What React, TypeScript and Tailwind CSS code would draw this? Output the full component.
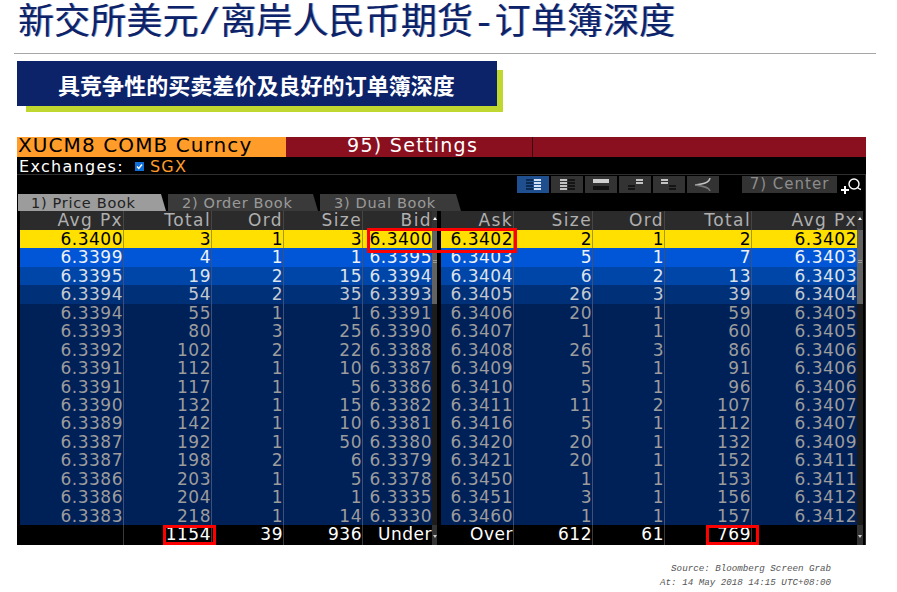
const bidRows: string[][] = [
  ["6.3400", "3", "1", "3", "6.3400"],
  ["6.3399", "4", "1", "1", "6.3395"],
  ["6.3395", "19", "2", "15", "6.3394"],
  ["6.3394", "54", "2", "35", "6.3393"],
  ["6.3394", "55", "1", "1", "6.3391"],
  ["6.3393", "80", "3", "25", "6.3390"],
  ["6.3392", "102", "2", "22", "6.3388"],
  ["6.3391", "112", "1", "10", "6.3387"],
  ["6.3391", "117", "1", "5", "6.3386"],
  ["6.3390", "132", "1", "15", "6.3382"],
  ["6.3389", "142", "1", "10", "6.3381"],
  ["6.3387", "192", "1", "50", "6.3380"],
  ["6.3387", "198", "2", "6", "6.3379"],
  ["6.3386", "203", "1", "5", "6.3378"],
  ["6.3386", "204", "1", "1", "6.3335"],
  ["6.3383", "218", "1", "14", "6.3330"],
];

const askRows: string[][] = [
  ["6.3402", "2", "1", "2", "6.3402"],
  ["6.3403", "5", "1", "7", "6.3403"],
  ["6.3404", "6", "2", "13", "6.3403"],
  ["6.3405", "26", "3", "39", "6.3404"],
  ["6.3406", "20", "1", "59", "6.3405"],
  ["6.3407", "1", "1", "60", "6.3405"],
  ["6.3408", "26", "3", "86", "6.3406"],
  ["6.3409", "5", "1", "91", "6.3406"],
  ["6.3410", "5", "1", "96", "6.3406"],
  ["6.3411", "11", "2", "107", "6.3407"],
  ["6.3416", "5", "1", "112", "6.3407"],
  ["6.3420", "20", "1", "132", "6.3409"],
  ["6.3421", "20", "1", "152", "6.3411"],
  ["6.3450", "1", "1", "153", "6.3411"],
  ["6.3451", "3", "1", "156", "6.3412"],
  ["6.3460", "1", "1", "157", "6.3412"],
];

const rowStyle = (i: number) => {
  if (i === 0) return "bg-[#ffe000] text-black";
  if (i === 1) return "bg-[#0056d6] text-[#eef2f8]";
  if (i === 2) return "bg-[#0046a8] text-[#dde3ec]";
  if (i === 3) return "bg-[#003078] text-[#c4c8d0]";
  return "bg-[#002058] text-[#9c9c9c]";
};

const RedBox = ({ className }: { className: string }) => (
  <div className={"absolute border-[3px] border-[#fe0000] pointer-events-none " + className} />
);

const Pane = ({
  cols,
  head,
  rows,
  foot,
  box,
}: {
  cols: string[];
  head: string[];
  rows: string[][];
  foot: string[];
  box: string;
}) => (
  <div className="relative flex flex-col">
    <div className="flex h-[19px] bg-[#2b2b2b] text-[#b0b0b0] tracking-[1.4px]">
      {head.map((h, c) => (
        <div key={c} className={cols[c] + " text-right border-r border-[#454545] last:border-r-0"}>
          {h}
        </div>
      ))}
    </div>
    {rows.map((r, i) => (
      <div key={i} className={"flex h-[18.44px] " + rowStyle(i)}>
        {r.map((v, c) => (
          <div
            key={c}
            className={
              cols[c] +
              " text-right border-r last:border-r-0 " +
              (i === 0 ? "border-[#a89a10]" : "border-[#3c5078]")
            }
          >
            {v}
          </div>
        ))}
      </div>
    ))}
    <div className="flex h-[20px] bg-black text-white">
      {foot.map((v, c) => (
        <div key={c} className={cols[c] + " text-right border-r border-[#3a3a3a] last:border-r-0"}>
          {v}
        </div>
      ))}
    </div>
    <RedBox className={box} />
  </div>
);

const Scrollbar = ({ className }: { className: string }) => (
  <div className={"flex flex-col bg-[#1c1c1c] " + className}>
    <div className="h-[19px] flex justify-center pt-[6px] bg-[#333]">
      <div className="border-x-[2px] border-b-[3px] border-x-transparent border-b-white h-0 w-0" />
    </div>
    <div className="h-[74px] bg-[#626262] flex flex-col items-center pt-[30px] gap-px">
      <div className="w-[4px] h-px bg-[#999]" />
      <div className="w-[4px] h-px bg-[#999]" />
    </div>
    <div className="flex-1" />
    <div className="h-[20px] flex justify-center pt-[10px] bg-[#333]">
      <div className="border-x-[2px] border-t-[3px] border-x-transparent border-t-[#ccc] h-0 w-0" />
    </div>
  </div>
);

const ToolButton = ({ active, children }: { active?: boolean; children: React.ReactNode }) => (
  <div className={"w-[32px] h-[17px] flex items-center justify-center " + (active ? "bg-[#1f4f8f]" : "bg-[#333333]")}>
    <svg width="22" height="13" viewBox="0 0 22 13">
      {children}
    </svg>
  </div>
);

const Tab = ({ active, label, className }: { active?: boolean; label: string; className: string }) => (
  <div
    className={
      "h-[17px] leading-[18px] text-[14.5px] tracking-[0.7px] whitespace-nowrap [clip-path:polygon(0_0,calc(100%-5px)_0,100%_100%,0_100%)] " +
      (active ? "bg-[#9c9c9c] text-[#222]" : "bg-[#3a3a3a] text-[#9a9a9a]") +
      " " +
      className
    }
  >
    {label}
  </div>
);

export default function App() {
  return (
    <div className="w-[897px] h-[592px] bg-white overflow-hidden flex flex-col">
      <div className="h-[54px] ml-[14px] w-[862px] border-b border-[#a6a6a6] pl-[4px] pt-[4px]">
        <h1 className="font-['Liberation_Mono','Noto_Sans_CJK_SC',serif] text-[36px] tracking-[0.1px] leading-[42px] text-[#0c2269] whitespace-nowrap [text-shadow:1px_0_0_#8f9bc0]">
          新交所美元/离岸人民币期货-订单簿深度
        </h1>
      </div>

      <div className="ml-[17px] mt-[7px] w-[486px] h-[51px] relative">
        <div className="absolute left-[9px] top-[9px] w-[477px] h-[42px] bg-[#c0d72f]" />
        <div className="relative w-[480px] h-[45px] bg-[#0c2269] text-white font-bold text-[22px] tracking-[0.05px] leading-[46px] pl-[41px] font-['Noto_Sans_CJK_SC',sans-serif] whitespace-nowrap">
          具竞争性的买卖差价及良好的订单簿深度
        </div>
      </div>

      <div className="ml-[17px] mt-[25px] w-[849px] h-[408px] shrink-0 bg-black font-['DejaVu_Sans',sans-serif] text-[17px] leading-[19px] tracking-[0.5px] flex flex-col">
        <div className="flex h-[20px] shrink-0">
          <div className="w-[269px] bg-[#ff9c2a] text-black text-[20px] leading-[16px] tracking-[1.1px] pl-px whitespace-nowrap">
            XUCM8 COMB Curncy
          </div>
          <div className="w-[247px] bg-[#8a101f] text-white text-[19px] leading-[17px] tracking-[1.3px] pl-[61px] border-r border-[#3c0810] whitespace-nowrap">
            95) Settings
          </div>
          <div className="flex-1 bg-[#8a101f]" />
        </div>

        <div className="h-[18px] shrink-0 flex items-center pt-px border-b border-[#2e2e2e] text-[16px] leading-[17px] tracking-[1.3px] text-white">
          <span className="ml-[2px]">Exchanges:</span>
          <span className="ml-[11px] w-[9px] h-[9px] bg-[#0f6fd8] flex items-center justify-center">
            <svg width="9" height="9" viewBox="0 0 9 9">
              <path d="M2 4.5 L3.8 6.5 L7 2.5" stroke="#fff" strokeWidth="1.4" fill="none" />
            </svg>
          </span>
          <span className="ml-[6px] text-[#ff9c2a]">SGX</span>
        </div>

        <div className="flex-1 pl-[3px] flex flex-col border-r border-[#2e2e2e]">
          <div className="h-[19px] shrink-0 flex items-start justify-end gap-[2px] pt-px pr-[3px]">
            <ToolButton active>
              <path d="M4 1h7v2H4zM4 4h7v2H4zM4 7h7v2H4zM4 10h7v2H4z" fill="#0c2a50" />
              <path d="M12 1h7v2h-7zM12 4h7v2h-7zM12 7h7v2h-7zM12 10h7v2h-7z" fill="#cfe0f2" />
            </ToolButton>
            <ToolButton>
              <path d="M4 1h7v2H4zM4 4h7v2H4zM4 7h7v2H4zM4 10h7v2H4z" fill="#c4c4c4" />
              <path d="M12 1h7v2h-7zM12 4h7v2h-7zM12 7h7v2h-7zM12 10h7v2h-7z" fill="#151515" />
            </ToolButton>
            <ToolButton>
              <path d="M3 1h16v4H3z" fill="#d0d0d0" />
              <path d="M3 8h16v4H3z" fill="#111" />
            </ToolButton>
            <ToolButton>
              <path d="M4 7h7v2H4zM4 10h7v2H4z" fill="#151515" />
              <path d="M12 1h7v2h-7zM12 4h7v2h-7z" fill="#c4c4c4" />
            </ToolButton>
            <ToolButton>
              <path d="M3 1h7v2H3zM3 4h7v2H3z" fill="#c4c4c4" />
              <path d="M11 7h7v2h-7zM11 10h7v2h-7z" fill="#151515" />
            </ToolButton>
            <ToolButton>
              <path d="M18 0 C17 5 11 6 3 7" stroke="#c4c4c4" strokeWidth="1.5" fill="none" />
              <path d="M3 7 C11 8 17 9 18 13" stroke="#777" strokeWidth="1.5" fill="none" />
            </ToolButton>
            <div className="ml-[21px] w-[95px] h-[17px] bg-[#333333] text-[#8c8c8c] text-[15px] tracking-[1px] leading-[17px] text-center">
              7) Center
            </div>
            <svg width="22" height="18" viewBox="0 0 22 18" className="ml-[1px]">
              <circle cx="14" cy="8" r="5" stroke="#fff" strokeWidth="1.4" fill="none" />
              <path d="M17.5 11.5 Q19 13 21 13.5" stroke="#fff" strokeWidth="1.4" fill="none" />
              <path d="M1 14h8M5 10v8" stroke="#fff" strokeWidth="2" />
            </svg>
          </div>

          <div className="h-[17px] shrink-0 flex items-end gap-[2px] -ml-[2px]">
            <Tab active label="1) Price Book" className="w-[148px] pl-[13px]" />
            <Tab label="2) Order Book" className="w-[150px] pl-[14px]" />
            <Tab label="3) Dual Book" className="w-[141px] pl-[14px]" />
          </div>

          <div className="relative flex flex-1 items-stretch">
            <Pane
              cols={["w-[104px]", "w-[88px]", "w-[72px]", "w-[79px]", "w-[69px]"]}
              head={["Avg Px", "Total", "Ord", "Size", "Bid"]}
              rows={bidRows}
              foot={["", "1154", "39", "936", "Under"]}
              box="left-[143px] top-[314px] w-[53px] h-[20px]"
            />
            <Scrollbar className="w-[5px] mr-[4px]" />
            <Pane
              cols={["w-[73px]", "w-[79px]", "w-[72px]", "w-[87px]", "w-[105px]"]}
              head={["Ask", "Size", "Ord", "Total", "Avg Px"]}
              rows={askRows}
              foot={["Over", "612", "61", "769", ""]}
              box="left-[265px] top-[314px] w-[53px] h-[20px]"
            />
            <Scrollbar className="w-[6px]" />
            <RedBox className="left-[347px] top-[17px] w-[150px] h-[25px]" />
          </div>
        </div>
      </div>

      <div className="ml-[659px] mt-[17px] w-[172px] font-['Liberation_Mono',monospace] italic text-[9.2px] leading-[14px] text-[#555] text-right whitespace-nowrap">
        <div>Source: Bloomberg Screen Grab</div>
        <div>At: 14 May 2018 14:15 UTC+08:00</div>
      </div>
    </div>
  );
}
